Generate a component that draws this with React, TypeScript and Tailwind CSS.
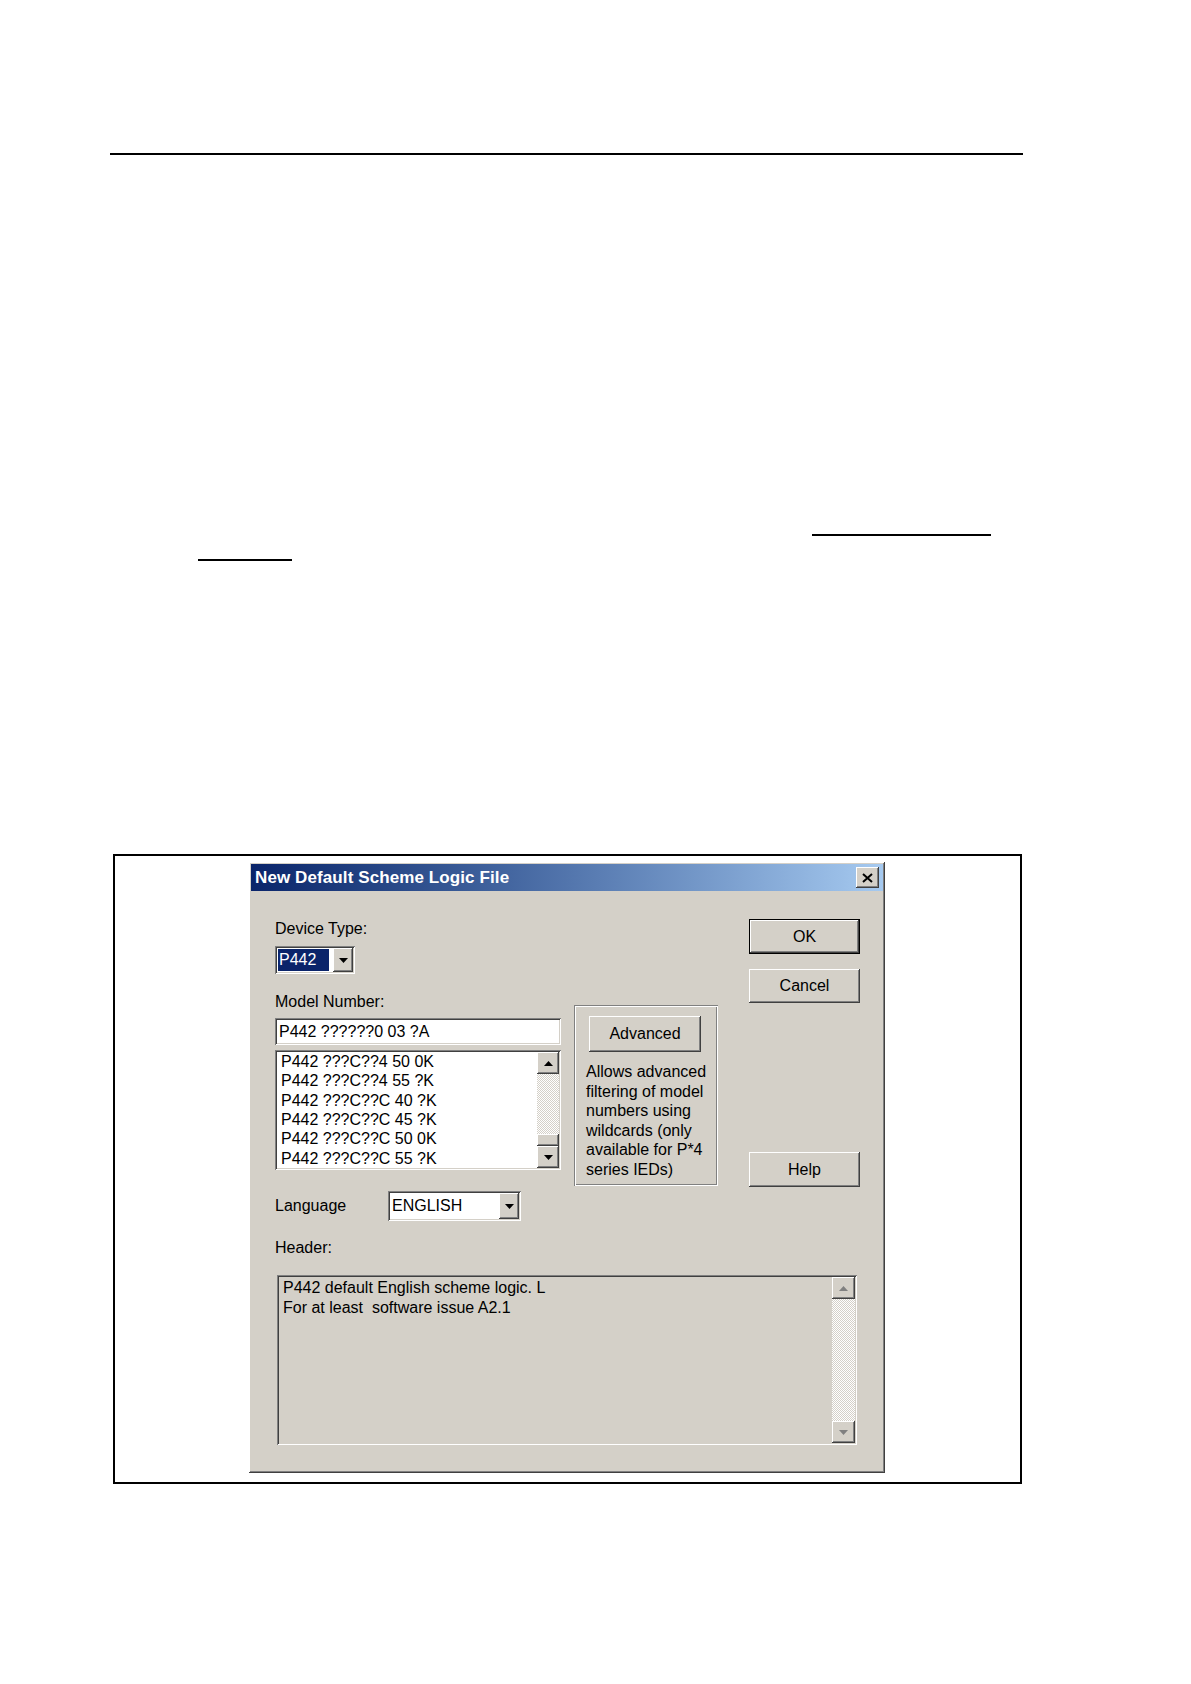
import React from "react";

const raised =
  "shadow-[inset_-1px_-1px_0_#404040,inset_1px_1px_0_#ffffff,inset_-2px_-2px_0_#808080,inset_2px_2px_0_#d4d0c8]";
const sunken =
  "shadow-[inset_1px_1px_0_#808080,inset_-1px_-1px_0_#ffffff,inset_2px_2px_0_#404040,inset_-2px_-2px_0_#d4d0c8]";
const etched =
  "shadow-[inset_1px_1px_0_#808080,inset_-1px_-1px_0_#ffffff,inset_2px_2px_0_#ffffff,inset_-2px_-2px_0_#808080]";
const dither =
  "bg-[image:repeating-conic-gradient(#d4d0c8_0%_25%,#ffffff_0%_50%)] bg-[length:2px_2px]";

function Tri({ up = false, color = "#000" }: { up?: boolean; color?: string }) {
  return (
    <svg width="9" height="5" viewBox="0 0 9 5">
      {up ? (
        <polygon points="0,5 9,5 4.5,0" fill={color} />
      ) : (
        <polygon points="0,0 9,0 4.5,5" fill={color} />
      )}
    </svg>
  );
}

function DropBtn() {
  return (
    <div className={`w-[20px] self-stretch my-[2px] mr-[2px] bg-[#d4d0c8] flex items-center justify-center ${raised}`}>
      <Tri />
    </div>
  );
}

function Button({ label, isDefault = false, className = "" }: { label: string; isDefault?: boolean; className?: string }) {
  return (
    <div className={`${isDefault ? "border border-black" : ""} ${className}`}>
      <div className={`h-full w-full bg-[#d4d0c8] flex items-center justify-center text-[16px] ${raised}`}>{label}</div>
    </div>
  );
}

const rows = [
  "P442 ???C??4 50 0K",
  "P442 ???C??4 55 ?K",
  "P442 ???C??C 40 ?K",
  "P442 ???C??C 45 ?K",
  "P442 ???C??C 50 0K",
  "P442 ???C??C 55 ?K",
];

export default function App() {
  return (
    <div className="w-[1191px] h-[1684px] bg-white text-black font-['Liberation_Sans',Arial,sans-serif] overflow-hidden">
      <div className="pt-[153px] pl-[110px]">
        <div className="w-[913px] h-[2px] bg-black" />
      </div>
      <div className="ml-[812px] mt-[379px] w-[179px] h-[2px] bg-black" />
      <div className="ml-[198px] mt-[23px] w-[94px] h-[2px] bg-black" />

      {/* frame */}
      <div className="ml-[113px] mt-[293px] w-[909px] h-[630px] border-2 border-black pl-[134px] pt-[6px]">
        {/* dialog */}
        <div className={`w-[636px] h-[611px] bg-[#d4d0c8] p-[2px] flex flex-col ${raised}`}>
          {/* title bar */}
          <div className="h-[27px] flex items-center justify-between bg-gradient-to-r from-[#0a246a] to-[#a6caf0] pl-[4px] pr-[4px]">
            <span className="text-white font-bold text-[17px] leading-none tracking-[0.1px]">New Default Scheme Logic File</span>
            <div className={`w-[23px] h-[21px] bg-[#d4d0c8] flex items-center justify-center ${raised}`}>
              <svg width="11" height="10" viewBox="0 0 11 10">
                <path d="M1 1 L10 9 M10 1 L1 9" stroke="#000" strokeWidth="2" />
              </svg>
            </div>
          </div>

          {/* body */}
          <div className="pl-[24px] pt-[28px] text-[16px] leading-[20px]">
            <div className="flex h-[268px]">
              {/* left column */}
              <div className="w-[286px] flex flex-col">
                <div className="h-[20px]">Device Type:</div>
                <div className={`mt-[7px] w-[80px] h-[28px] bg-white flex items-stretch ${sunken}`}>
                  <div className="flex-1 flex items-center pl-[3px] py-[3px]">
                    <span className="bg-[#0a246a] text-white h-full flex items-center pl-[1px] pr-[13px]">P442</span>
                  </div>
                  <DropBtn />
                </div>
                <div className="mt-[18px] h-[20px]">Model Number:</div>
                <div className={`mt-[6px] h-[27px] bg-white flex items-center pl-[4px] ${sunken}`}>P442 ??????0 03 ?A</div>
                <div className={`mt-[5px] h-[120px] bg-white flex p-[2px] ${sunken}`}>
                  <div className="flex-1 pl-[4px] leading-[19.35px]">
                    {rows.map((r) => (
                      <div key={r}>{r}</div>
                    ))}
                  </div>
                  <div className="w-[22px] flex flex-col">
                    <div className={`h-[22px] bg-[#d4d0c8] flex items-center justify-center ${raised}`}>
                      <Tri up />
                    </div>
                    <div className={`flex-1 ${dither}`} />
                    <div className={`h-[12px] bg-[#d4d0c8] ${raised}`} />
                    <div className={`h-[22px] bg-[#d4d0c8] flex items-center justify-center ${raised}`}>
                      <Tri />
                    </div>
                  </div>
                </div>
              </div>

              {/* group box */}
              <div className={`ml-[13px] mt-[86px] w-[144px] h-[181px] pl-[12px] pt-[11px] ${etched}`}>
                <Button label="Advanced" className="ml-[3px] w-[112px] h-[36px]" />
                <div className="mt-[10px] leading-[19.5px] text-[16px]">
                  Allows advanced
                  <br />
                  filtering of model
                  <br />
                  numbers using
                  <br />
                  wildcards (only
                  <br />
                  available for P*4
                  <br />
                  series IEDs)
                </div>
              </div>

              {/* buttons */}
              <div className="ml-[31px] w-[111px] flex flex-col">
                <Button label="OK" isDefault className="h-[35px]" />
                <Button label="Cancel" className="mt-[15px] h-[34px]" />
                <Button label="Help" className="mt-auto h-[35px]" />
              </div>
            </div>

            {/* language */}
            <div className="mt-[4px] flex items-center">
              <div className="w-[113px]">Language</div>
              <div className={`w-[133px] h-[30px] bg-white flex items-stretch ${sunken}`}>
                <div className="flex-1 flex items-center pl-[4px]">ENGLISH</div>
                <DropBtn />
              </div>
            </div>

            <div className="mt-[17px] h-[20px]">Header:</div>

            <div className={`mt-[17px] ml-[2px] w-[580px] h-[170px] bg-[#d4d0c8] flex p-[2px] ${sunken}`}>
              <div className="flex-1 pl-[4px] pt-[1px] leading-[20px]">
                <div>P442 default English scheme logic. L</div>
                <div>For at least&nbsp; software issue A2.1</div>
              </div>
              <div className="w-[23px] flex flex-col">
                <div className={`h-[22px] bg-[#d4d0c8] flex items-center justify-center ${raised}`}>
                  <Tri up color="#808080" />
                </div>
                <div className={`flex-1 ${dither}`} />
                <div className={`h-[22px] bg-[#d4d0c8] flex items-center justify-center ${raised}`}>
                  <Tri color="#808080" />
                </div>
              </div>
            </div>
          </div>
        </div>
      </div>
    </div>
  );
}
